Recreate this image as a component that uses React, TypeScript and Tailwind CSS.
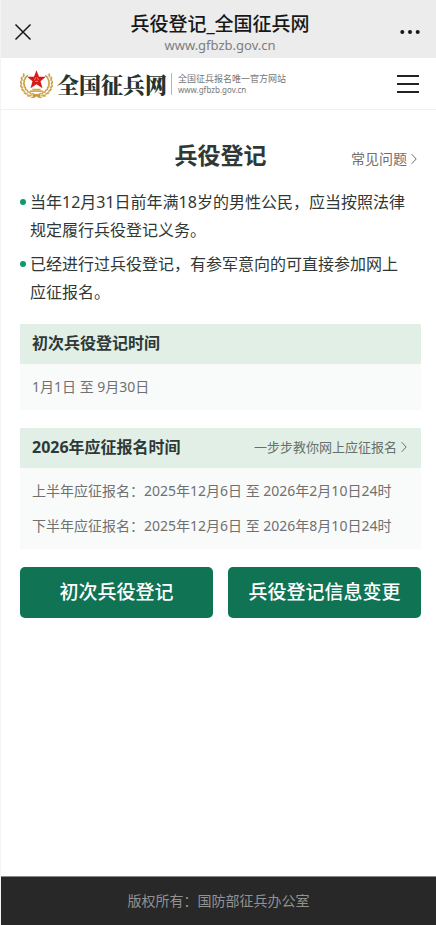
import type { ReactNode } from "react";

const LEAF_ANGLES = [8, 24, 40, 56, 72, 88, 104, 120];

function WreathHalf() {
  return (
    <g>
      <path d="M49 78 A 42 38 0 0 1 14 14" fill="none" stroke="#c9a04a" strokeWidth="2" />
      {LEAF_ANGLES.map((angle) => {
        const rad = ((90 + angle) * Math.PI) / 180;
        const x = 49 + 42 * Math.cos(rad);
        const y = 40 + 38 * Math.sin(rad);
        return (
          <g key={angle} transform={`translate(${x} ${y}) rotate(${angle + 180})`} fill="#cda349">
            <ellipse cx="5" cy="3" rx="7" ry="2.6" transform="rotate(22)" />
            <ellipse cx="5" cy="-3" rx="7" ry="2.6" transform="rotate(-22)" />
          </g>
        );
      })}
    </g>
  );
}

function Emblem() {
  return (
    <svg viewBox="0 0 98 84" className="h-7 w-[33px] shrink-0" aria-hidden="true">
      <WreathHalf />
      <g transform="translate(98 0) scale(-1 1)">
        <WreathHalf />
      </g>
      <path
        d="M49 1 L56.500 20 L77 20 L61 33.500 L67 55 L49 43 L31 55 L37 33.500 L21 20 L41.500 20 Z"
        fill="#d51a1a"
      />
      <path
        d="M47 22 L43 30 M51 22 L55 30 M44 34 H54"
        fill="none"
        stroke="#f0b93c"
        strokeWidth="2.200"
      />
      <path d="M36 56 H62 L61 60 H37 Z M30 61 H68 V66 H30 Z" fill="#d2a849" />
      <path d="M37 75 L49 71 L61 75 L56 83 L49 79 L42 83 Z" fill="#c99a3d" />
    </svg>
  );
}

function Chevron() {
  return (
    <svg viewBox="0 0 6 12" className="h-3 w-[6px]" fill="none" stroke="currentColor" aria-hidden="true">
      <path d="M.7 1.200 L5.200 6 L.7 10.800" />
    </svg>
  );
}

function BrowserBar() {
  return (
    <div className="flex h-[58px] items-center justify-between bg-[#ececec] pt-[5px] pr-[16px] pl-[13px] text-[#181818]">
      <button type="button" aria-label="关闭" className="w-[26px]">
        <svg viewBox="0 0 18 18" className="size-[18px]" fill="none" stroke="currentColor" strokeWidth="1.500">
          <path d="M1.500 1.500 L16.500 16.500 M16.500 1.500 L1.500 16.500" />
        </svg>
      </button>
      <div className="mt-[3px] text-center">
        <div className="text-[19px] leading-6 font-medium">兵役登记_全国征兵网</div>
        <div className="text-[13px] leading-[18px] text-[#7d7d7d]">www.gfbzb.gov.cn</div>
      </div>
      <button type="button" aria-label="更多" className="w-[20px]">
        <svg viewBox="0 0 20 6" className="h-[6px] w-[20px]" fill="currentColor">
          <circle cx="2.300" cy="3" r="2" />
          <circle cx="10" cy="3" r="2" />
          <circle cx="17.700" cy="3" r="2" />
        </svg>
      </button>
    </div>
  );
}

function SiteHeader() {
  return (
    <header className="flex h-[52px] items-center justify-between border-b border-[#f0f0f0] pr-[17px] pl-[19px]">
      <a href="#" className="flex items-center">
        <Emblem />
        <span className="ml-1 font-['Noto_Serif_CJK_SC','Noto_Sans_CJK_SC',serif] text-[22px] leading-7 font-black text-[#26332f]">
          全国征兵网
        </span>
        <span className="ml-1 border-l border-[#b5b5b5] pl-[6px] text-[#777]">
          <span className="block text-[9px] leading-[12px]">全国征兵报名唯一官方网站</span>
          <span className="block text-[8px] leading-[10px]">www.gfbzb.gov.cn</span>
        </span>
      </a>
      <button type="button" aria-label="菜单" className="flex w-[22px] flex-col gap-[6px]">
        <span className="h-[2px] bg-[#222]" />
        <span className="h-[2px] bg-[#222]" />
        <span className="h-[2px] bg-[#222]" />
      </button>
    </header>
  );
}

function Notice({ children }: { children: ReactNode }) {
  return (
    <li className="flex gap-1">
      <span className="mt-[11px] size-[6px] shrink-0 rounded-full bg-[#0d9b6c]" />
      <span>{children}</span>
    </li>
  );
}

function TimeCard({ title, link, rows }: { title: string; link?: string; rows: string[] }) {
  return (
    <section className="mt-[18px] bg-[#f8fbfa]">
      <div className="flex h-10 items-center justify-between bg-[#e2efe6] pr-[14px] pb-[2px] pl-3">
        <h2 className="text-[16px] leading-6 font-bold">{title}</h2>
        {link && (
          <a href="#" className="flex items-center gap-1 text-[13px] leading-6 text-[#66706c]">
            {link}
            <Chevron />
          </a>
        )}
      </div>
      <div className="px-3 pt-[5px] pb-[6px] text-[14px] leading-[35px] text-[#707070]">
        {rows.map((row) => (
          <p key={row}>{row}</p>
        ))}
      </div>
    </section>
  );
}

function ActionButton({ children }: { children: ReactNode }) {
  return (
    <button type="button" className="h-[51px] flex-1 rounded-[5px] bg-[#0f7354] text-[19px] font-medium text-white">
      {children}
    </button>
  );
}

export default function App() {
  return (
    <div className="flex min-h-screen flex-col border-l border-[#f4f4f4] bg-white font-['Noto_Sans','Noto_Sans_CJK_SC',sans-serif] text-[#2f3835]">
      <BrowserBar />
      <SiteHeader />
      <main className="flex-1 pt-[29px] pr-[15px] pl-[19px]">
        <div className="grid grid-cols-[1fr_auto_1fr] items-center">
          <h1 className="col-start-2 text-[23px] leading-8 font-bold">兵役登记</h1>
          <a
            href="#"
            className="flex items-center gap-1 justify-self-end pt-[8px] pr-[4px] text-[14px] leading-6 text-[#707070]"
          >
            常见问题
            <Chevron />
          </a>
        </div>
        <ul className="mt-[17px] flex flex-col gap-[6px] pr-3 text-[16px] leading-7">
          <Notice>当年12月31日前年满18岁的男性公民，应当按照法律规定履行兵役登记义务。</Notice>
          <Notice>已经进行过兵役登记，有参军意向的可直接参加网上应征报名。</Notice>
        </ul>
        <TimeCard title="初次兵役登记时间" rows={["1月1日 至 9月30日"]} />
        <TimeCard
          title="2026年应征报名时间"
          link="一步步教你网上应征报名"
          rows={[
            "上半年应征报名：2025年12月6日 至 2026年2月10日24时",
            "下半年应征报名：2025年12月6日 至 2026年8月10日24时",
          ]}
        />
        <div className="mt-[18px] flex gap-[15px]">
          <ActionButton>初次兵役登记</ActionButton>
          <ActionButton>兵役登记信息变更</ActionButton>
        </div>
      </main>
      <footer className="border-t border-[#8a8a8a] bg-[#282828] py-3 text-center text-[14px] leading-6 text-[#929292]">
        版权所有：国防部征兵办公室
      </footer>
    </div>
  );
}
